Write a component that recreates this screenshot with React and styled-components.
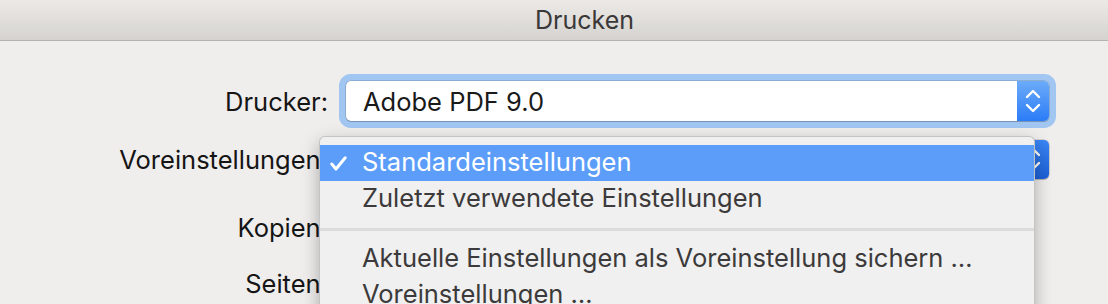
import React from "react";
import styled, { createGlobalStyle } from "styled-components";

const Global = createGlobalStyle`
  html, body { margin: 0; padding: 0; background: #efeeed; }
  body { font-family: Inter, "Noto Sans", "Liberation Sans", sans-serif; -webkit-font-smoothing: antialiased; }
`;

const Window = styled.div`
  position: relative;
  width: 1108px;
  height: 304px;
  overflow: hidden;
  background: #efeeed;
`;

const TitleBar = styled.div`
  height: 41px;
  box-sizing: border-box;
  padding-left: 61px;
  border-bottom: 1px solid #b4b2af;
  background: linear-gradient(#ece9e6, #d5d3d0);
  display: flex;
  align-items: center;
  justify-content: center;
  font-size: 25px;
  color: #3a3838;
`;

const Form = styled.div`
  display: flex;
  flex-direction: column;
  padding: 40px 59px 0 0;
`;

const Row = styled.div`
  display: grid;
  grid-template-columns: 328px 1fr;
  column-gap: 18px;
  align-items: center;
  height: 40px;
  margin-top: ${(p) => p.$gap || 0}px;
`;

const Label = styled.div`
  text-align: right;
  font-size: 25.5px;
  color: #151515;
  white-space: nowrap;
`;

const Popup = styled.div`
  position: relative;
  height: ${(p) => p.$h || 40}px;
  display: flex;
  align-items: stretch;
  background: #fff;
  border-radius: 5px;
  box-shadow: 0 0 0 0.5px rgba(0, 0, 0, 0.25), 0 1px 1px rgba(0, 0, 0, 0.15)
    ${(p) => (p.$focus ? ", 0 0 0 7px #a0c6f1" : "")};
`;

const Value = styled.div`
  flex: 1;
  display: flex;
  align-items: center;
  padding-left: 17px;
  font-size: 25.5px;
  color: #1a1a1a;
`;

const Stepper = styled.div`
  width: 32px;
  display: flex;
  align-items: center;
  justify-content: center;
  border-radius: 0 5px 5px 0;
  background: ${(p) =>
    p.$pressed
      ? "linear-gradient(#3a86f6, #1c5fd6)"
      : "linear-gradient(#6cabf9, #2b7cf7)"};
`;

const Menu = styled.div`
  position: absolute;
  left: 319px;
  top: 136px;
  width: 716px;
  height: 200px;
  box-sizing: border-box;
  padding-top: 8px;
  background: #f0f0f0;
  border-radius: 6px 6px 0 0;
  border: 1px solid rgba(0, 0, 0, 0.18);
  box-shadow: 0 6px 18px rgba(0, 0, 0, 0.28);
  font-size: 25.5px;
`;

const Item = styled.div`
  height: 36px;
  box-sizing: border-box;
  padding-bottom: 3px;
  display: flex;
  align-items: center;
  white-space: nowrap;
  background: ${(p) => (p.$active ? "#5b9df8" : "transparent")};
  color: ${(p) => (p.$active ? "#ffffff" : "#3c3a3a")};
`;

const Check = styled.div`
  width: 42px;
  display: flex;
  justify-content: flex-end;
  padding-right: 15px;
  padding-top: 3px;
  box-sizing: border-box;
`;

const Separator = styled.div`
  height: 24px;
  display: flex;
  align-items: center;
  &::after {
    content: "";
    flex: 1;
    height: 3px;
    background: #dcdcdc;
  }
`;

const Chevrons = () => (
  <svg width="16" height="24" viewBox="0 0 16 24" fill="none" stroke="#fff" strokeWidth="2.4" strokeLinecap="round" strokeLinejoin="round">
    <polyline points="2,8 8,2 14,8" />
    <polyline points="2,16 8,22 14,16" />
  </svg>
);

const CheckMark = () => (
  <svg width="17" height="15" viewBox="0 0 17 15" fill="none" stroke="#fff" strokeWidth="3" strokeLinecap="round" strokeLinejoin="round">
    <polyline points="1.8,8 6,13 15.2,1.8" />
  </svg>
);

export default function App() {
  return (
    <>
      <Global />
      <Window>
        <TitleBar>Drucken</TitleBar>
        <Form>
          <Row>
            <Label>Drucker:</Label>
            <Popup $focus>
              <Value>Adobe PDF 9.0</Value>
              <Stepper><Chevrons /></Stepper>
            </Popup>
          </Row>
          <Row $gap={18}>
            <Label>Voreinstellungen:</Label>
            <Popup $h={39}>
              <Value />
              <Stepper $pressed><Chevrons /></Stepper>
            </Popup>
          </Row>
          <Row $gap={28}>
            <Label>Kopien:</Label>
            <div />
          </Row>
          <Row $gap={16}>
            <Label>Seiten:</Label>
            <div />
          </Row>
        </Form>
        <Menu>
          <Item $active>
            <Check><CheckMark /></Check>
            Standardeinstellungen
          </Item>
          <Item>
            <Check />
            Zuletzt verwendete Einstellungen
          </Item>
          <Separator />
          <Item>
            <Check />
            Aktuelle Einstellungen als Voreinstellung sichern …
          </Item>
          <Item>
            <Check />
            Voreinstellungen …
          </Item>
        </Menu>
      </Window>
    </>
  );
}
